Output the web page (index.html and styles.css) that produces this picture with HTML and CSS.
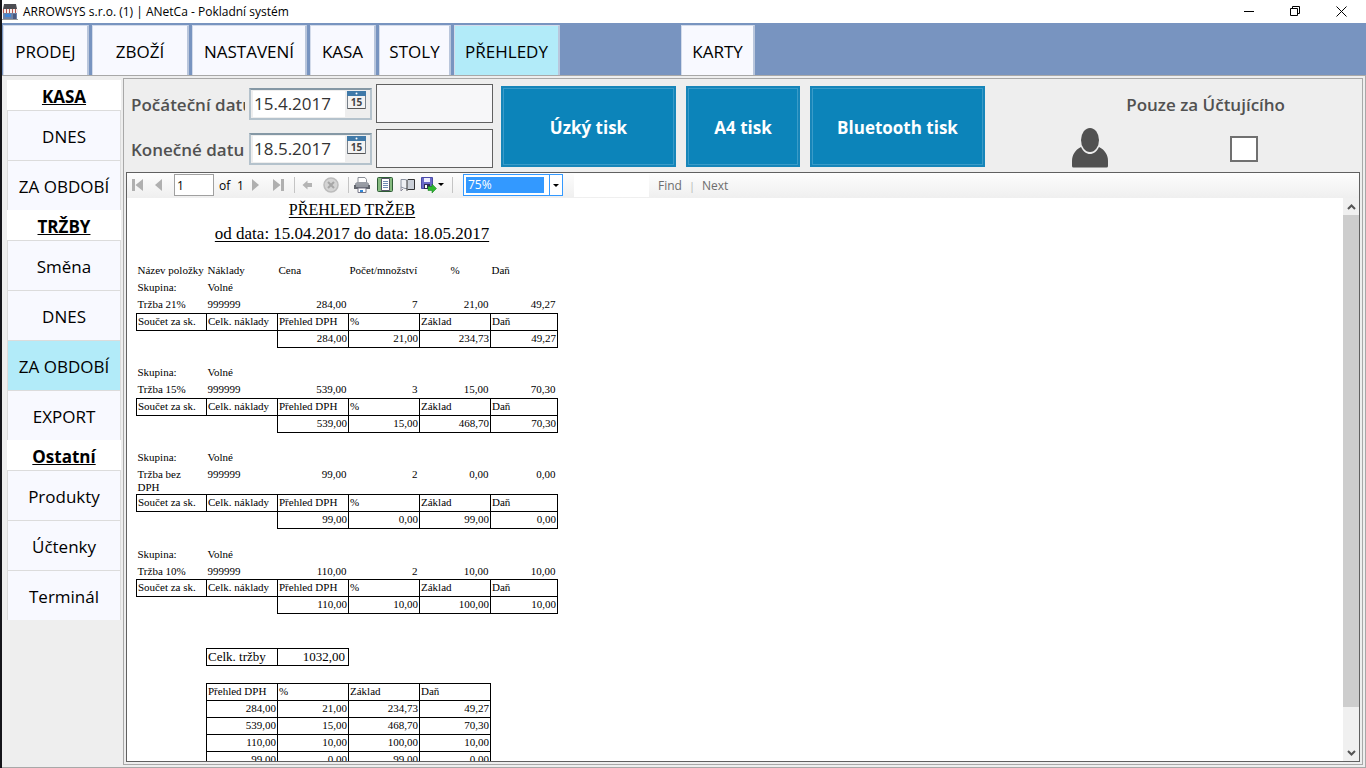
FILE: index.html
```html
<!DOCTYPE html>
<html lang="cs">
<head>
<meta charset="utf-8">
<title>ARROWSYS s.r.o. (1) | ANetCa - Pokladní systém</title>
<link rel="stylesheet" href="styles.css">
</head>
<body>
<header class="titlebar">
  <svg class="app-icon" width="16" height="16" viewBox="0 0 16 16" aria-hidden="true">
    <path d="M2 0h12l1 5H1z" fill="#4c4c52"/><path d="M1 8h14v7H1z" fill="#6d82a8"/>
    <path d="M0 5h16v4H0z" fill="#f4eeee"/>
    <path d="M1 5h1v4H1zM4 5h1v4H4zM7 5h1v4H7zM10 5h1v4h-1zM13 5h1v4h-1z" fill="#b5564d"/>
    <path d="M3 10h6v3H3z" fill="#3f86d8"/><path d="M11 10h3v5h-3z" fill="#4a5a80"/><path d="M0 15h16v1H0z" fill="#999"/>
  </svg>
  <h1 class="title">ARROWSYS s.r.o. (1) | ANetCa - Pokladní systém</h1>
  <div class="window-buttons">
    <button class="window-button" aria-label="Minimalizovat"><svg width="11" height="11"><path d="M0 5.500h10" stroke="#000"/></svg></button>
    <button class="window-button" aria-label="Obnovit"><svg width="11" height="11" fill="none" stroke="#000"><path d="M.5 2.500h7v7h-7zM2.500 2.500v-2h7v7h-2"/></svg></button>
    <button class="window-button" aria-label="Zavřít"><svg width="11" height="11"><path d="M.5.5l10 10M10.500.5l-10 10" stroke="#000"/></svg></button>
  </div>
</header>

<nav class="tabs">
  <button class="tab">PRODEJ</button>
  <button class="tab">ZBOŽÍ</button>
  <button class="tab">NASTAVENÍ</button>
  <button class="tab">KASA</button>
  <button class="tab">STOLY</button>
  <button class="tab active">PŘEHLEDY</button>
  <span></span>
  <button class="tab">KARTY</button>
</nav>

<main class="frame">
  <aside class="sidebar">
    <h2 class="side-title">KASA</h2>
    <button class="side-item">DNES</button>
    <button class="side-item">ZA OBDOBÍ</button>
    <h2 class="side-title">TRŽBY</h2>
    <button class="side-item">Směna</button>
    <button class="side-item">DNES</button>
    <button class="side-item active">ZA OBDOBÍ</button>
    <button class="side-item">EXPORT</button>
    <h2 class="side-title">Ostatní</h2>
    <button class="side-item">Produkty</button>
    <button class="side-item">Účtenky</button>
    <button class="side-item">Terminál</button>
  </aside>

  <section class="panel">
    <form class="filters">
      <div class="dates">
        <label class="date-label" for="from">Počáteční datum</label>
        <div class="date-box">
          <input class="date-input" id="from" type="text" value="15.4.2017">
          <button class="calendar" type="button" aria-label="Vybrat počáteční datum"><svg width="20" height="19" viewBox="0 0 20 19"><rect x=".5" y="1.500" width="18" height="16" fill="#f3f3f3" stroke="#77808a"/><path d="M0 0h19v5H0z" fill="#3f79a8"/><circle cx="9.500" cy="2.500" r="1" fill="#fff"/><path d="M1 17.500h17" stroke="#555"/><text class="calendar-day" x="9.500" y="15" text-anchor="middle">15</text></svg></button>
        </div>
        <input class="time-box" type="text" aria-label="Počáteční čas">
        <label class="date-label" for="to">Konečné datum</label>
        <div class="date-box">
          <input class="date-input" id="to" type="text" value="18.5.2017">
          <button class="calendar" type="button" aria-label="Vybrat konečné datum"><svg width="20" height="19" viewBox="0 0 20 19"><rect x=".5" y="1.500" width="18" height="16" fill="#f3f3f3" stroke="#77808a"/><path d="M0 0h19v5H0z" fill="#3f79a8"/><circle cx="9.500" cy="2.500" r="1" fill="#fff"/><path d="M1 17.500h17" stroke="#555"/><text class="calendar-day" x="9.500" y="15" text-anchor="middle">15</text></svg></button>
        </div>
        <input class="time-box" type="text" aria-label="Konečný čas">
      </div>
      <div class="print-buttons">
        <button class="print wide" type="button">Úzký tisk</button>
        <button class="print" type="button">A4 tisk</button>
        <button class="print wide" type="button">Bluetooth tisk</button>
      </div>
      <div class="user-filter">
        <svg class="person" width="36" height="40" viewBox="0 0 36 40" aria-hidden="true"><ellipse cx="18" cy="12" rx="9" ry="12" fill="#515151"/><path d="M9 19C3 22 0 27 0 33v5q0 1.500 1.500 1.500h33Q36 39.500 36 38v-5c0-6-3-11-9-14-2 4.500-5.500 7-9 7s-7-2.500-9-7z" fill="#515151"/></svg>
        <div class="user-check">
          <label for="only-user">Pouze za Účtujícího</label>
          <input class="check" id="only-user" type="checkbox">
        </div>
      </div>
    </form>

    <div class="viewer">
      <div class="toolbar">
        <button class="tool nav" aria-label="První strana"><svg width="12" height="12"><path d="M0 0h3v12H0zM11 0v12L3.500 6z" fill="#b0b0b0"/></svg></button>
        <button class="tool nav" aria-label="Předchozí strana"><svg width="10" height="12"><path d="M8 0v12L1 6z" fill="#b0b0b0"/></svg></button>
        <input class="page-input" type="text" value="1" aria-label="Strana">
        <span class="of">of</span><span class="count">1</span>
        <button class="tool" aria-label="Další strana"><svg width="10" height="12"><path d="M1 0v12l7-6z" fill="#b0b0b0"/></svg></button>
        <button class="tool nav" aria-label="Poslední strana"><svg width="12" height="12"><path d="M8 0h3v12H8zM0 0v12l7.500-6z" fill="#b0b0b0"/></svg></button>
        <i class="sep"></i>
        <button class="tool" aria-label="Zpět"><svg width="12" height="12"><path d="M.5 6l5-4.500V4H10v4H5.500v2.500z" fill="#b4b4b4"/></svg></button>
        <button class="tool" aria-label="Zastavit"><svg width="16" height="16"><circle cx="8" cy="8" r="7" fill="#d4d4d4" stroke="#bcbcbc" stroke-width="1.500"/><path d="M5 5l6 6M11 5l-6 6" stroke="#a6a6a6" stroke-width="2"/></svg></button>
        <i class="sep"></i>
        <button class="tool" aria-label="Tisk"><svg width="16" height="16"><path d="M4 .5h7l1.500 2V7H4z" fill="#fff" stroke="#8a8e96"/><path d="M1 6.500l2-1.500h10l2 1.500V12H1z" fill="#9a9ea6"/><path d="M0 8h16v4H0z" fill="#62666e"/><path d="M2 9h12" stroke="#c8ccd4"/><path d="M4 11h8v4.500H4z" fill="#fff" stroke="#778"/><path d="M6 13h3v2H6z" fill="#2e86d8"/></svg></button>
        <button class="tool" aria-label="Rozložení tisku"><svg width="16" height="16"><rect x=".5" y=".5" width="15" height="14" rx="1" fill="#86bb80" stroke="#2f5d36"/><path d="M4.500 1.500h8v12h-8z" fill="#fff" stroke="#556"/><path d="M6 4.500h5M6 6.500h5M6 8.500h5M6 10.500h5" stroke="#6f8cb5"/></svg></button>
        <button class="tool" aria-label="Vzhled stránky"><svg width="16" height="14"><path d="M1 1.500h4l3 1v8H5L1 9z" fill="#eef0f4" stroke="#8a92a0"/><path d="M1 9v4l2-2" fill="none" stroke="#889"/><path d="M7 2.500l1-1h6.500v10H8l-1 1z" fill="#cbd0d8" stroke="#333"/></svg></button>
        <button class="tool export" aria-label="Export"><svg width="24" height="16"><path d="M.5.500h11v11H.5z" fill="#6a6ac8" stroke="#4a4aa8"/><path d="M3 1h6v4H3z" fill="#eef"/><path d="M3 7h6v5H3z" fill="#2d2d55"/><path d="M4 8h2v3H4z" fill="#fff"/><path d="M7 9.500h4V7l4.500 4.500L11 16v-2.500H7z" fill="#2fb82f" stroke="#0d7418" stroke-width=".5"/><path d="M17 6h6l-3 3z" fill="#000"/></svg></button>
        <i class="sep"></i>
        <div class="zoom"><select class="zoom-select" aria-label="Zvětšení"><option>75%</option></select></div>
        <input class="search" type="text" aria-label="Hledat text">
        <button class="link-button">Find</button>
        <span class="divider">|</span>
        <button class="link-button">Next</button>
      </div>

      <div class="report-area">
        <article class="report">
          <h2 class="report-title">PŘEHLED TRŽEB</h2>
          <h3 class="report-title period">od data: 15.04.2017 do data: 18.05.2017</h3>
          <table class="sales">
            <colgroup><col class="first"><col><col><col><col><col class="last"></colgroup>
            <thead>
              <tr><th>Název položky</th><th>Náklady</th><th>Cena</th><th>Počet/množství</th><th class="middle">%</th><th>Daň</th></tr>
            </thead>
            <tbody>
              <tr><td>Skupina:</td><td>Volné</td><td></td><td></td><td></td><td></td></tr>
              <tr class="item"><td>Tržba 21%</td><td>999999</td><td>284,00</td><td>7</td><td>21,00</td><td>49,27</td></tr>
              <tr class="boxed"><td>Součet za sk.</td><td>Celk. náklady</td><td>Přehled DPH</td><td>%</td><td>Základ</td><td>Daň</td></tr>
              <tr class="sum"><td></td><td></td><td>284,00</td><td>21,00</td><td>234,73</td><td>49,27</td></tr>
              <tr><td colspan="6"></td></tr>
            </tbody>
            <tbody>
              <tr><td>Skupina:</td><td>Volné</td><td></td><td></td><td></td><td></td></tr>
              <tr class="item"><td>Tržba 15%</td><td>999999</td><td>539,00</td><td>3</td><td>15,00</td><td>70,30</td></tr>
              <tr class="boxed"><td>Součet za sk.</td><td>Celk. náklady</td><td>Přehled DPH</td><td>%</td><td>Základ</td><td>Daň</td></tr>
              <tr class="sum"><td></td><td></td><td>539,00</td><td>15,00</td><td>468,70</td><td>70,30</td></tr>
              <tr><td colspan="6"></td></tr>
            </tbody>
            <tbody>
              <tr><td>Skupina:</td><td>Volné</td><td></td><td></td><td></td><td></td></tr>
              <tr class="item"><td>Tržba bez DPH</td><td>999999</td><td>99,00</td><td>2</td><td>0,00</td><td>0,00</td></tr>
              <tr class="boxed"><td>Součet za sk.</td><td>Celk. náklady</td><td>Přehled DPH</td><td>%</td><td>Základ</td><td>Daň</td></tr>
              <tr class="sum"><td></td><td></td><td>99,00</td><td>0,00</td><td>99,00</td><td>0,00</td></tr>
              <tr><td colspan="6"></td></tr>
            </tbody>
            <tbody>
              <tr><td>Skupina:</td><td>Volné</td><td></td><td></td><td></td><td></td></tr>
              <tr class="item"><td>Tržba 10%</td><td>999999</td><td>110,00</td><td>2</td><td>10,00</td><td>10,00</td></tr>
              <tr class="boxed"><td>Součet za sk.</td><td>Celk. náklady</td><td>Přehled DPH</td><td>%</td><td>Základ</td><td>Daň</td></tr>
              <tr class="sum"><td></td><td></td><td>110,00</td><td>10,00</td><td>100,00</td><td>10,00</td></tr>
            </tbody>
          </table>

          <table class="summary total">
            <tr><th>Celk. tržby</th><td>1032,00</td></tr>
          </table>

          <table class="summary">
            <thead><tr><th>Přehled DPH</th><th>%</th><th>Základ</th><th>Daň</th></tr></thead>
            <tbody>
              <tr><td>284,00</td><td>21,00</td><td>234,73</td><td>49,27</td></tr>
              <tr><td>539,00</td><td>15,00</td><td>468,70</td><td>70,30</td></tr>
              <tr><td>110,00</td><td>10,00</td><td>100,00</td><td>10,00</td></tr>
              <tr><td>99,00</td><td>0,00</td><td>99,00</td><td>0,00</td></tr>
            </tbody>
          </table>
        </article>
        <div class="scrollbar">
          <button class="scroll-button" aria-label="Nahoru"><svg width="9" height="6"><path d="M1 5l3.500-3.500L8 5" fill="none" stroke="#555" stroke-width="2"/></svg></button>
          <div class="track"><div class="thumb"></div></div>
          <button class="scroll-button" aria-label="Dolů"><svg width="9" height="6"><path d="M1 1l3.500 3.500L8 1" fill="none" stroke="#555" stroke-width="2"/></svg></button>
        </div>
      </div>
    </div>
  </section>
</main>
</body>
</html>
```
FILE: styles.css
```css
* { box-sizing: border-box; }
body {
  margin: 0;
  height: 100vh;
  display: flex;
  flex-direction: column;
  overflow: hidden;
  border-left: 2px solid #15151a;
  background: #eee;
  color: #000;
  font-family: "Open Sans", "Noto Sans", sans-serif;
}
button, input, select { font: inherit; color: inherit; margin: 0; padding: 0; border-radius: 0; }
h1, h2, h3 { margin: 0; font-weight: 400; }
svg { display: block; }

.titlebar { display: flex; align-items: center; height: 23px; flex: none; background: #fff; padding-right: 2px; }
.title { font-size: 12px; line-height: 23px; margin-left: 5px; }
.window-buttons { display: flex; margin-left: auto; }
.window-button { width: 46px; height: 21px; border: 0; background: none; display: grid; place-items: center; }

.tabs {
  display: grid;
  grid-template-columns: 86px 97px 115px 66px 72px 106px 115px 74px;
  gap: 3px;
  flex: none;
  height: 52px;
  padding: 2px 0 0 1px;
  background: #7894c0;
}
.tab { border: 1px solid #d3dbea; border-width: 1px 2px 0 1px; border-right-color: #b9c6dc; padding-top: 2px; background: #f8f9ff; font-size: 17px; white-space: nowrap; }
.active, .side-item.active { background: #b2ebf9; }

.frame { display: flex; flex: 1; min-height: 0; border: 1px solid #a8a8a8; border-left: 0; }
.sidebar { width: 121px; flex: none; padding: 4px 2px 0 5px; display: flex; flex-direction: column; }
.side-title { height: 30px; flex: none; background: #fff; font-size: 17px; font-weight: 700; line-height: 34px; text-align: center; text-decoration: underline; }
.side-item { height: 50px; flex: none; border: 1px solid #dcdcdc; border-bottom: 0; padding-top: 2px; background: #f8f9ff; font-size: 17px; white-space: nowrap; }

.panel { flex: 1; min-width: 0; display: flex; flex-direction: column; margin: 2px 2px 2px 0; border: 1px solid #a8a8a8; }
.filters { display: flex; flex: none; padding: 5px 0 4px 7px; }
.dates { display: grid; grid-template-columns: 114px 123px 117px; grid-auto-rows: 39px; gap: 6px 4px; align-items: center; }
.date-label { overflow: hidden; white-space: nowrap; font-size: 17px; font-weight: 600; color: #515151; padding-top: 2px; }
.date-box { display: flex; align-items: flex-start; height: 32px; padding: 1px 2px; border: 2px solid #b4c2cc; border-top-color: #8598a5; }
.date-input { width: 92px; height: 26px; border: 0; padding-left: 1px; background: #fff; font-size: 17px; color: #333; }
.calendar { border: 0; background: none; margin-left: 2px; }
.calendar-day { font-size: 10px; font-weight: 700; fill: #444; }
.time-box { width: 100%; height: 39px; border: 1px solid #606060; background: #f7f7f9; }
.print-buttons { display: flex; gap: 10px; margin: 2px 0 0 8px; height: 81px; }
.print { width: 114px; border: 2px solid #1685b9; outline: 1px solid #3a9bc8; outline-offset: -3px; padding-top: 2px; background: #0c84ba; color: #fff; font-size: 17px; font-weight: 700; }
.print.wide { width: 175px; }
.user-filter { display: flex; margin: 0 77px 0 auto; color: #515151; }
.person { align-self: flex-end; margin-right: 18px; }
.user-check { display: flex; flex-direction: column; font-size: 17px; font-weight: 600; line-height: 24px; padding-top: 9px; }
.check { appearance: none; width: 28px; height: 26px; margin: 19px 27px 0 auto; border: 2px solid #707070; background: #fff; }

.viewer { flex: 1; min-height: 0; display: flex; flex-direction: column; margin: 0 2px 2px; border: 1px solid #606060; background: #fff; }
.toolbar { display: flex; align-items: center; flex: none; height: 25px; padding-bottom: 1px; background: linear-gradient(#fdfdfd, #efefef); font-size: 12px; }
.tool { width: 22px; height: 22px; margin-right: 1px; border: 0; background: none; display: grid; place-items: center; flex: none; }
.tool.nav { width: 21px; margin-right: 0; }
.tool.export { width: 26px; }
.page-input { width: 40px; height: 22px; margin: 0 5px; border: 1px solid #a0a0a0; padding-left: 2px; background: #fff; }
.of { width: 18px; }
.count { width: 8px; }
.sep { width: 1px; height: 16px; margin: 0 2px 0 5px; background: #c4c4c4; }
.zoom { position: relative; margin-left: 8px; width: 100px; height: 22px; border: 1px solid #3399ff; background: #fff; }
.zoom-select { appearance: none; display: block; width: 78px; height: 16px; margin: 2px 0 0 2px; border: 0; padding-left: 2px; background: #3399ff; color: #fff; line-height: 16px; }
.zoom::before { content: ""; position: absolute; right: 12px; top: 0; width: 1px; height: 100%; background: #3399ff; }
.zoom::after { content: ""; position: absolute; right: 3px; top: 9px; border: 3px solid transparent; border-top-color: #000; border-bottom: 0; }
.search { width: 75px; height: 23px; margin: 0 9px 0 11px; border: 0; background: #fff; }
.link-button { border: 0; background: none; color: #6d6d6d; }
.divider { margin: 0 7px; color: #b4b4b4; font-size: 11px; }

.report-area { flex: 1; min-height: 0; display: flex; }
.report { flex: 1; min-width: 0; overflow: hidden; padding-left: 9px; font-family: "Liberation Serif", serif; font-size: 11px; }
.report-title { width: 432px; font-size: 16px; line-height: 24px; text-align: center; text-decoration: underline; text-underline-offset: 2px; }
.report-title.period { font-size: 17px; }
table { border-collapse: collapse; table-layout: fixed; }
th, td { height: 17px; padding: 2px 1px 0; line-height: 13px; vertical-align: top; font-weight: 400; text-align: left; }
.sales { width: 422px; margin-top: 16px; }
.first { width: 70px; }
.last { width: 67px; }
.sales th { white-space: nowrap; }
.sales .middle { text-align: center; }
.item td:nth-child(n+3), .sum td, .summary td { text-align: right; }
.item td:nth-child(n+3) { padding-right: 2px; }
.boxed td, .sum td:nth-child(n+3), .summary th, .summary td { border: 1px solid #000; padding-top: 1px; }
.boxed td, .sum td { white-space: nowrap; }
.summary { width: 285px; margin: 17px 0 0 70px; }
.summary.total { width: 143px; margin-top: 34px; font-size: 13px; }
.summary.total td { padding-right: 3px; }

.scrollbar { display: flex; flex-direction: column; flex: none; width: 16px; background: #f0f0f0; }
.scroll-button { height: 17px; border: 0; background: none; display: grid; place-items: center; }
.track { flex: 1; }
.thumb { height: 93%; background: #cdcdcd; }
```
